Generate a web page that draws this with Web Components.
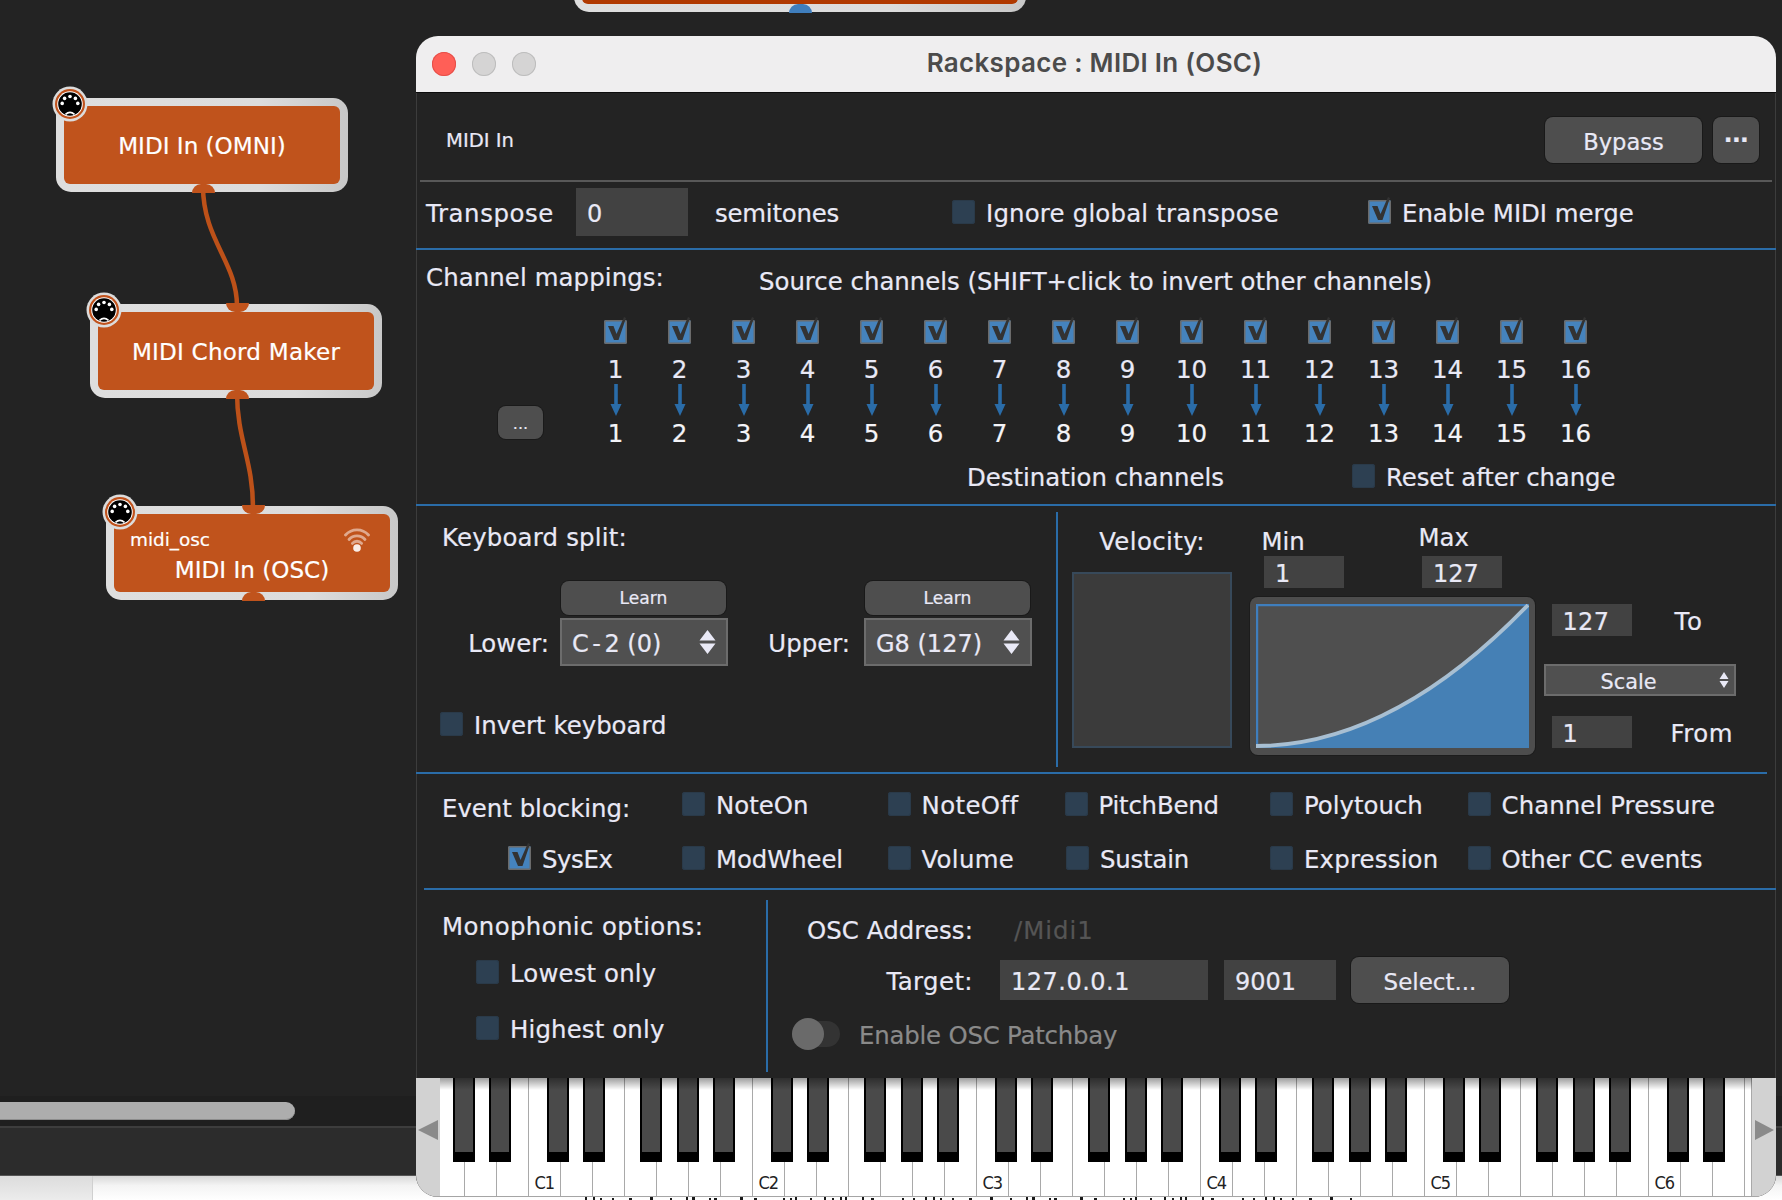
<!DOCTYPE html>
<html lang="en"><head><meta charset="utf-8"><title>Rackspace</title>
<style>html,body{margin:0;padding:0;width:1782px;height:1200px;overflow:hidden;background:#232323}</style>
</head><body>
<gp-desktop>
  <gp-wires></gp-wires>
  <gp-node style="left:574px;top:-82px;width:452px" fill="#b03900" bottom="226" bottomcolor="#3f7ebd"></gp-node>
  <gp-node style="left:56px;top:98px" port="1" bottom="147"><span>MIDI In (OMNI)</span></gp-node>
  <gp-node style="left:90px;top:304px;letter-spacing:.2px" port="1" top="147" bottom="147"><span>MIDI Chord Maker</span></gp-node>
  <gp-node style="left:106px;top:506px" port="1" top="147" bottom="147" sub="midi_osc" wifi="1"><span>MIDI In (OSC)</span></gp-node>
  <gp-window caption="Rackspace : MIDI In (OSC)">
    <gp-header></gp-header>
    <gp-rule tone="gray" l="4" r="4"></gp-rule>
    <gp-transpose></gp-transpose>
    <gp-rule></gp-rule>
    <gp-channels></gp-channels>
    <gp-rule></gp-rule>
    <gp-split></gp-split>
    <gp-rule r="9"></gp-rule>
    <gp-events></gp-events>
    <gp-rule l="8"></gp-rule>
    <gp-lower></gp-lower>
    <gp-keyboard></gp-keyboard>
  </gp-window>
</gp-desktop>
<script>
const def=(name,css,html)=>customElements.define(name,class extends HTMLElement{
  connectedCallback(){ if(this.shadowRoot) return;
    this.attachShadow({mode:'open'}).innerHTML='<style>'+css+'</style>'+(typeof html==='function'?html(this):html);
  }
});
const FG='#e9e9f6';

def('gp-desktop',`
  :host{display:flex;flex-direction:column;width:1782px;height:1200px;background:#232323;overflow:hidden;position:relative}
  .canvas{position:relative;z-index:1;height:1096px;flex:none}
  .track{height:30px;flex:none;background:#1f1f1f;display:flex;align-items:center}
  .thumb{width:295px;height:18px;background:#adadad;border-radius:0 9px 9px 0;box-shadow:inset 0 -1px 0 #8c8c8c}
  .bar{height:50px;flex:none;background:#2c2c2c;border-top:2px solid #3d3d3d;border-bottom:1px solid #555;box-sizing:border-box}
  .foot{flex:1;display:flex;background:linear-gradient(#d8d8d8,#f4f4f4 40%,#fff)}
  .foot i{display:block;width:92px;border-right:1px solid #d0d0d0;background:linear-gradient(#dcdcdc,#ececec)}
  .foot svg{align-self:flex-end;margin-left:492px;display:block}
`,()=>{
  let m='',x=0,s=7;
  while(x<770){s=(s*37+11)%101;const w=s%3===0?3:2;m+=`<rect x="${x}" y="${s%2}" width="${w}" height="3"/>`;x+=w+3+s%13+(s%9===0?14:0);}
  return `<div class="canvas"><slot></slot></div><div class="track"><div class="thumb"></div></div><div class="bar"></div><div class="foot"><i></i><svg width="772" height="3" fill="#1a1a1a">${m}</svg></div>`;
});

def('gp-wires',`:host{position:absolute;left:0;top:0;display:block;width:420px;height:520px}svg{display:block}`,
`<svg width="420" height="520" fill="none" stroke="#bd5119" stroke-width="4.5"><path d="M203 186C203 240 237 262 237 306"/><path d="M237 392C237 440 253 460 253 508"/></svg>`);

const portSvg=`<svg class="midi" width="36" height="36" viewBox="0 0 36 36"><circle cx="18" cy="18" r="17.5" fill="#dcdcdc"/><circle cx="18" cy="18" r="15" fill="#c0521c"/><circle cx="18" cy="18" r="12.8" fill="#fff"/><circle cx="18" cy="18" r="11.8" fill="#000"/><g fill="#fff"><circle cx="18" cy="10.5" r="1.8"/><circle cx="12.6" cy="12.4" r="1.8"/><circle cx="23.4" cy="12.4" r="1.8"/><circle cx="10.2" cy="17.4" r="1.8"/><circle cx="25.8" cy="17.4" r="1.8"/></g><path d="M13.5 28.4Q18 24.4 22.5 28.4" stroke="#fff" stroke-width="1.6" fill="none"/></svg>`;
const wifiSvg=`<svg class="wifi" width="26" height="28" viewBox="0 0 26 28" fill="none" stroke="#fff" stroke-linecap="round"><g stroke-opacity=".5" stroke-width="2.8"><path d="M1.5 10A15.5 15.5 0 0 1 24.5 10"/><path d="M5 14.5A10.5 10.5 0 0 1 21 14.5"/><path d="M8.4 18.4A6 6 0 0 1 17.6 18.4"/></g><circle cx="13" cy="23" r="3.8" fill="#fff" fill-opacity=".9" stroke="none"/></svg>`;

def('gp-node',`
  :host{position:absolute;display:block;width:292px;height:94px;box-sizing:border-box;border-radius:15px;background:linear-gradient(90deg,#dedede,#dcdcdc 70%,#c8c8c8);padding:8px;color:#fff;font:23.1px/28px "DejaVu Sans",sans-serif;-webkit-text-stroke:.2px #fff}
  .in{position:relative;height:78px;border-radius:6px;display:flex;flex-direction:column;align-items:center;justify-content:center;padding-top:2px;box-sizing:border-box}
  .in.sub{justify-content:flex-start;padding-top:15px}
  .sub b{align-self:flex-start;margin-left:16px;font:18.4px/22px "DejaVu Sans",sans-serif;margin-bottom:5px}
  .p{position:absolute;width:23px;height:9px}
  .t{top:-1px;border-radius:0 0 12px 12px}
  .b{bottom:-1px;border-radius:12px 12px 0 0}
  .midi{position:absolute;left:-4px;top:-12px}
  .wifi{position:absolute;right:20px;top:11px}
`,h=>{
  const f=h.getAttribute('fill')||'#c0531c',t=h.getAttribute('top'),b=h.getAttribute('bottom'),bc=h.getAttribute('bottomcolor')||f,s=h.getAttribute('sub');
  return `${t?`<div class="p t" style="left:${t-11.5}px;background:${f}"></div>`:''}${b?`<div class="p b" style="left:${b-11.5}px;background:${bc}"></div>`:''}
  <div class="in ${s?'sub':''}" style="background:${f}">${s?`<b style="font-weight:400">${s}</b>`:''}<slot></slot>${h.hasAttribute('wifi')?wifiSvg:''}</div>
  ${h.hasAttribute('port')?portSvg:''}`;
});

def('gp-window',`
  :host{position:absolute;left:416px;top:36px;width:1360px;height:1161px;display:flex;flex-direction:column;border-radius:22px;overflow:hidden;background:#232323;color:${FG};font:24.4px/28px "DejaVu Sans",sans-serif;-webkit-text-stroke:.2px currentColor}
  .cap{height:56px;flex:none;background:#efeeef;border-bottom:1px solid #0c0c0c;display:grid;grid-template-columns:120px 1fr 120px;align-items:center;color:#4b4b4b;font:600 26px/28px Inter,"Liberation Sans",sans-serif;letter-spacing:.3px;text-align:center;-webkit-text-stroke:0}
  .tl{display:flex;gap:16px;padding-left:16px}
  .tl i{width:24px;height:24px;border-radius:50%;background:#d5d4d4;box-shadow:inset 0 0 0 1px #bdbdbd}
  .tl i:first-child{background:#ff5f57;box-shadow:inset 0 0 0 1px #e5504a}
  .ttl{padding:0 3px 2px 0}
  .body{flex:1;display:flex;flex-direction:column;box-shadow:inset 1px 0 0 #3c3c3c,inset -1px 0 0 #3c3c3c}
`,h=>`<div class="cap"><div class="tl"><i></i><i></i><i></i></div><div class="ttl">${h.getAttribute('caption')}</div><div></div></div><div class="body"><slot></slot></div>`);

def('gp-rule',`:host{display:block;height:2px;flex:none}`,h=>{
  h.style.background=h.getAttribute('tone')==='gray'?'#585858':'#2a6ca8';
  h.style.marginLeft=(h.getAttribute('l')||0)+'px';h.style.marginRight=(h.getAttribute('r')||0)+'px';return '';
});

def('gp-btn',`:host{display:flex;align-items:center;justify-content:center;background:#4e4e4e;border-radius:8px;box-shadow:0 0 0 1px #191919;box-sizing:border-box;color:${FG};font-size:22.6px;padding-top:3px}`,`<slot></slot>`);
def('gp-field',`:host{display:flex;align-items:center;box-sizing:border-box;background:#424242;padding:3px 0 0 11px;color:${FG};font-size:24px;flex:none}`,`<slot></slot>`);
def('gp-select',`
  :host{display:flex;align-items:center;justify-content:space-between;box-sizing:border-box;background:#505050;border:2.5px solid #6c6c6c;padding:0 10px;color:${FG};font-size:24px}
  svg{display:block;flex:none}
  span{padding-top:3px}
`,h=>h.hasAttribute('small')
 ?`<span><slot></slot></span><svg width="10" height="16" viewBox="0 0 10 16" fill="${FG}"><path d="M5 0L9.5 7H.5ZM5 16L.5 9H9.5Z"/></svg>`
 :`<span><slot></slot></span><svg width="17" height="24" viewBox="0 0 17 24" fill="${FG}"><path d="M8.5 0L16.5 10.6H.5ZM8.5 24L.5 13.4H16.5Z"/></svg>`);
def('gp-check',`
  :host{display:inline-flex;align-items:center;gap:11px;height:24px;white-space:nowrap;line-height:26px}
  .b{position:relative;width:23px;height:24px;flex:none;box-sizing:border-box;border-radius:3px;background:#2d4052;box-shadow:inset 0 0 0 1px #2a3a49}
  .b.on{background:#4583bd;box-shadow:inset 0 0 0 1.5px #6b6b6b;border-radius:2px}
  svg{position:absolute;left:0;top:-4px;display:block}
  .l{padding-top:4px}
`,h=>`<div class="b ${h.hasAttribute('on')?'on':''}">${h.hasAttribute('on')?`<svg width="24" height="28" viewBox="0 -4 24 28"><polygon fill="#333" points="4,6 9.5,6 12.5,14 20,-3 22,-2 14.5,20 10,20"/></svg>`:''}</div><span class="l"><slot></slot></span>`);

def('gp-header',`
  :host{display:flex;height:87px;flex:none;box-sizing:border-box;padding:24px 17px 0 30px;gap:11px;align-items:flex-start}
  .t{flex:1;height:46px;line-height:48px;font-size:19.6px}
  gp-btn{height:46px}
  .dots{font-weight:700;font-size:23px;line-height:22px;padding-bottom:16px;letter-spacing:-.5px}
`,`<div class="t">MIDI In</div><gp-btn style="width:157px">Bypass</gp-btn><gp-btn style="width:46px"><span class="dots">...</span></gp-btn>`);

def('gp-transpose',`
  :host{display:grid;height:66px;flex:none;box-sizing:border-box;padding:6px 0 12px 10px;grid-template-columns:150px 139px 237px 416px 1fr;align-items:center}
  div{padding-top:4px}
`,`<div style="letter-spacing:.6px">Transpose</div><gp-field style="height:48px;width:112px">0</gp-field><div style="letter-spacing:-.2px">semitones</div><gp-check style="letter-spacing:.2px">Ignore global transpose</gp-check><gp-check on>Enable MIDI merge</gp-check>`);

def('gp-channels',`
  :host{display:block;height:254px;flex:none;box-sizing:border-box;padding-top:14px}
  .top{display:grid;grid-template-columns:333px 1fr;padding-left:10px;height:56px;white-space:nowrap}
  .top div{line-height:28px}
  .src{padding-top:4px}
  .grid{display:grid;grid-template-columns:167.5px repeat(16,64px);grid-template-rows:24px 40px 32px 34px;justify-items:center}
  .grid gp-check{gap:0}
  .more{grid-column:1;grid-row:1/-1;align-self:end;justify-self:start;margin:0 0 11px 82px;width:45px;height:33px;font-size:16px;line-height:12px;box-shadow:0 0 0 1px #1a1a1a}
  .n{line-height:26px;align-self:start;margin-top:13px;font-size:24.5px}
  .d{line-height:36px;font-size:24.5px;color:#f4f4f8}
  svg{display:block}
  .bot{display:grid;grid-template-columns:551px 385px 1fr;height:54px;align-items:center}
  .bot div{padding-top:2px}
  .rs{letter-spacing:-.1px;margin-top:-2px}
`,()=>{
  let cells='';
  for(let i=1;i<=16;i++){
    cells+=`<gp-check on style="grid-column:${i+1};grid-row:1"></gp-check><div class="n" style="grid-column:${i+1};grid-row:2">${i}</div>`+
    `<svg style="grid-column:${i+1};grid-row:3" width="12" height="32" viewBox="0 0 12 32" fill="#2a6ca8"><rect x="4.2" width="3.6" height="21"/><path d="M.5 20H11.5L6 32Z"/></svg>`+
    `<div class="d" style="grid-column:${i+1};grid-row:4">${i}</div>`;
  }
  return `<div class="top"><div style="letter-spacing:.1px">Channel mappings:</div><div class="src">Source channels (SHIFT+click to invert other channels)</div></div>
  <div class="grid"><gp-btn class="more">...</gp-btn>${cells}</div>
  <div class="bot"><div></div><div>Destination channels</div><gp-check class="rs">Reset after change</gp-check></div>`;
});

def('gp-split',`
  :host{display:grid;height:266px;flex:none;box-sizing:border-box;padding:6px 0 5px;grid-template-columns:640px 2px 1fr}
  .v{background:#2a6ca8}
  .kb{display:grid;grid-template-columns:144px 168px 136px 168px;grid-template-rows:69px 37px 48px 70px;align-items:center}
  .title{grid-column:1/-1;align-self:start;padding:12px 0 0 26px;letter-spacing:.2px}
  .learn{height:34px;width:165px;font-size:17.1px;align-self:start;margin-left:1px;padding-top:0}
  .lab{text-align:right;padding:4px 11px 0 0}
  .lab.up{padding-right:14px}
  .inv{grid-column:1/-1;align-self:end;margin-left:24px}
  .r{display:flex}
  .c1{width:160px;margin-left:14px;display:flex;flex-direction:column;align-items:center}
  .c1 .h{height:60px;line-height:60px;letter-spacing:.4px}
  .box{width:160px;height:176px;box-sizing:border-box;background:#3b3b3b;border:2px solid #37495a}
  .c2{width:285px;margin-left:18px;display:flex;flex-direction:column}
  .mm{display:flex;height:85px}
  .mm>div{display:flex;flex-direction:column}
  .min{padding:16px 0 0 11.5px;width:157px}
  .max{padding-top:12px}
  .max span{margin-bottom:4px}
  .c3{margin-left:8.5px;width:192px;padding-top:92px;display:flex;flex-direction:column}
  .row{display:flex;align-items:center;height:32px;padding-left:8px}
  .row span{padding-top:4px}
`,`<div class="kb">
    <div class="title">Keyboard split:</div>
    <div></div><gp-btn class="learn">Learn</gp-btn><div></div><gp-btn class="learn">Learn</gp-btn>
    <div class="lab">Lower:</div><gp-select style="height:48px">C<span style="margin:0 3.5px">-</span>2 (0)</gp-select>
    <div class="lab up">Upper:</div><gp-select style="height:48px">G8 (127)</gp-select>
    <gp-check class="inv">Invert keyboard</gp-check>
  </div>
  <div class="v"></div>
  <div class="r">
    <div class="c1"><div class="h">Velocity:</div><div class="box"></div></div>
    <div class="c2">
      <div class="mm">
        <div class="min"><span>Min</span><gp-field style="width:80px;height:32px;margin-left:2.5px">1</gp-field></div>
        <div class="max"><span>Max</span><gp-field style="width:80px;height:32px;margin-left:3.4px">127</gp-field></div>
      </div>
      <gp-curve></gp-curve>
    </div>
    <div class="c3">
      <div class="row"><gp-field style="width:80px;height:32px;letter-spacing:.3px">127</gp-field><span style="margin-left:43px;letter-spacing:1.8px">To</span></div>
      <gp-select small style="height:32px;margin:28px 0 20px;font-size:20.8px;padding:0 5px 0 55px">Scale</gp-select>
      <div class="row"><gp-field style="width:80px;height:32px">1</gp-field><span style="margin-left:39px;letter-spacing:.5px">From</span></div>
    </div>
  </div>`);

def('gp-curve',`
  :host{display:block;width:285px;height:158px;box-sizing:border-box;background:#4d4d4d;border-radius:8px;box-shadow:0 0 0 1px #1c1c1c;padding:7px 5.5px 7px 6px}
  svg{display:block}
`,`<svg width="273" height="144" viewBox="0 0 273 144"><rect width="273" height="144" fill="#4f4f4f"/><path d="M0 142Q136 142 273 0V144H0Z" fill="#4580b5"/><path d="M1 144V1H273" fill="none" stroke="#3f7ebd" stroke-width="2.4"/><path d="M0 142Q136 142 272 1" fill="none" stroke="#a8bfd2" stroke-width="3.8"/></svg>`);

def('gp-events',`
  :host{display:grid;height:114px;flex:none;box-sizing:border-box;padding:18px 0 0 26px;grid-template-columns:240px 205.5px 177px 205.5px 197.5px 1fr;grid-auto-rows:24px;row-gap:30px;white-space:nowrap}
  .lab{line-height:24px;margin-top:5px}
  .sys{margin-left:66px}
  .sus{margin-left:1.5px}
`,`<div class="lab">Event blocking:</div><gp-check>NoteOn</gp-check><gp-check style="letter-spacing:.4px">NoteOff</gp-check><gp-check style="letter-spacing:-.2px">PitchBend</gp-check><gp-check>Polytouch</gp-check><gp-check style="letter-spacing:.1px">Channel Pressure</gp-check>
<gp-check on class="sys" style="letter-spacing:-.4px">SysEx</gp-check><gp-check style="letter-spacing:-.1px">ModWheel</gp-check><gp-check style="letter-spacing:.3px">Volume</gp-check><gp-check class="sus" style="letter-spacing:-.2px">Sustain</gp-check><gp-check style="letter-spacing:.2px">Expression</gp-check><gp-check>Other CC events</gp-check>`);

def('gp-lower',`
  :host{display:grid;height:188px;flex:none;box-sizing:border-box;padding:10px 0 10px;grid-template-columns:350px 2px 1fr}
  .v{background:#2a6ca8}
  .mono{display:flex;flex-direction:column;padding-left:26px;align-items:flex-start}
  .mono .h{height:50px;line-height:54px;margin-bottom:10px;letter-spacing:.4px}
  .mono gp-check{margin-left:34px;margin-bottom:32px;letter-spacing:.15px}
  .osc{display:flex;flex-direction:column}
  .r1,.r2{display:grid;align-items:center}
  .r1{height:57px;padding-top:4px;box-sizing:border-box;letter-spacing:.1px;grid-template-columns:205px 1fr}
  .lab{text-align:right}
  .r2 .lab{padding-top:4px;letter-spacing:.4px}
  .r1 .val{margin-left:41px;color:#555;letter-spacing:1px}
  .r2{height:46px;grid-template-columns:205px 27px 208px 16px 112px 15px 158px}
  .r3{display:flex;align-items:center;height:31px;margin-top:15px;padding-left:24px;color:#8a8a8a;letter-spacing:-.2px}
  .r3 span{padding-top:4px}
  .tg{width:48px;height:26px;border-radius:13px;background:#333;display:flex;align-items:center;margin-right:19px}
  .tg i{width:32px;height:32px;border-radius:50%;background:#6a6a6a}
  .sel{font-size:23px}
`,`<div class="mono"><div class="h">Monophonic options:</div><gp-check>Lowest only</gp-check><gp-check>Highest only</gp-check></div>
  <div class="v"></div>
  <div class="osc">
    <div class="r1"><div class="lab">OSC Address:</div><div class="val">/Midi1</div></div>
    <div class="r2"><div class="lab">Target:</div><div></div><gp-field style="height:40px;letter-spacing:.5px">127.0.0.1</gp-field><div></div><gp-field style="height:40px">9001</gp-field><div></div><gp-btn class="sel" style="height:46px">Select...</gp-btn></div>
    <div class="r3"><div class="tg"><i></i></div><span>Enable OSC Patchbay</span></div>
  </div>`);

def('gp-keyboard',`
  :host{display:flex;height:119px;flex:none;background:#d2d2d2;color:#222;border-bottom:1px solid #a5a5a5;box-sizing:border-box;-webkit-text-stroke:0}
  .side{width:24px;flex:none;display:flex;align-items:center;justify-content:center;padding-bottom:15px;box-sizing:border-box}
  .keys{position:relative;flex:1;display:flex;overflow:hidden;background:#fff}
  .w{flex:none;box-sizing:border-box;border-right:1.5px solid #a9a9a9;display:flex;align-items:flex-end;padding:0 0 4px 5.5px;font:18px/18px "DejaVu Sans",sans-serif;font-stretch:condensed;letter-spacing:-1px}
  .bk{position:absolute;top:0;width:22px;height:84px;background:#000}
  .bk i{display:block;margin:0 2px;height:74px;background:#4a4a4a}
  .sh{position:absolute;left:0;right:0;top:0;height:12px;background:linear-gradient(rgba(0,0,0,.38),rgba(0,0,0,0))}
`,()=>{
  let w='<div class="w" style="width:25px"></div>',b='';
  for(let x=465;x<1752;x+=32){
    const lab=(x-529)%224===0&&x>=529?'C'+((x-529)/224+1):'';
    w+=`<div class="w" style="width:${Math.min(32,1752-x)}px">${lab}</div>`;
  }
  for(let k=0;k<7;k++)for(const o of[17.5,54,111,147.5,184]){
    const x=305+224*k+o-440; if(x>-22&&x<1312) b+=`<div class="bk" style="left:${x}px"><i></i></div>`;
  }
  return `<div class="side"><svg width="20" height="20" viewBox="0 0 20 20"><path d="M0 10L20 0V20Z" fill="#8a8a8a"/></svg></div><div class="keys">${w}${b}<div class="sh"></div></div><div class="side"><svg width="19" height="20" viewBox="0 0 19 20"><path d="M19 10L0 0V20Z" fill="#8a8a8a"/></svg></div>`;
});
</script>
</body></html>
